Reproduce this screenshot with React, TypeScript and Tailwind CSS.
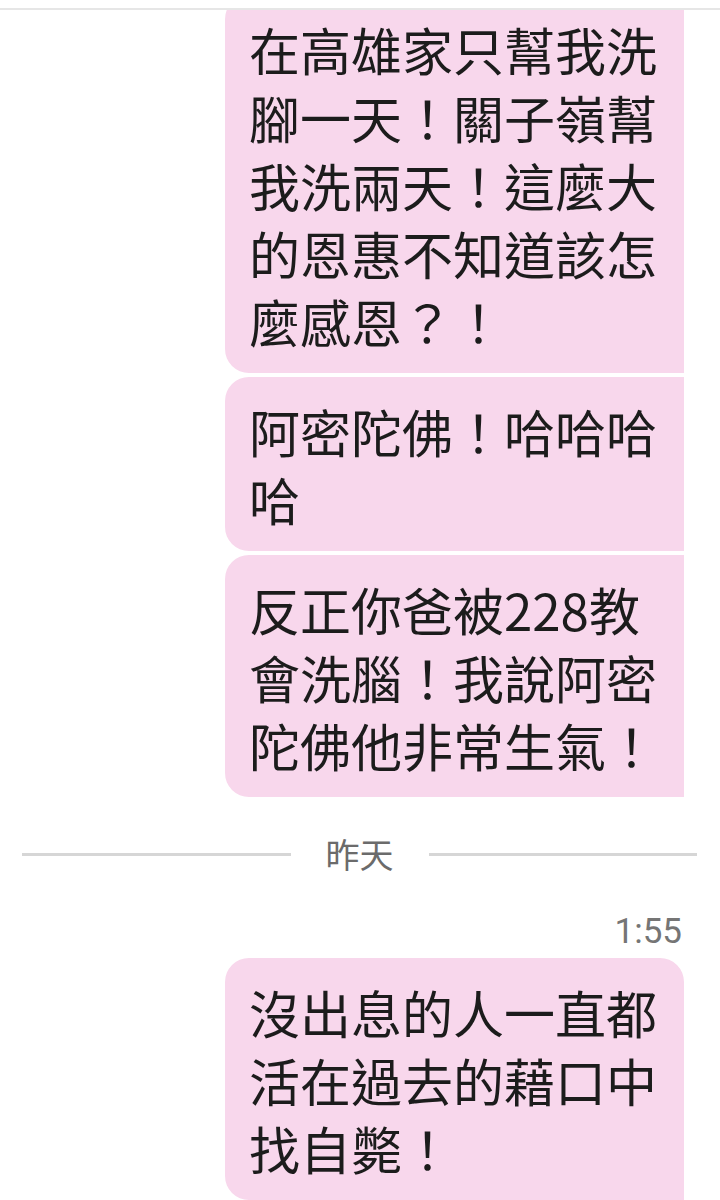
const cjk = { fontFamily: '"Noto Sans CJK TC", "Noto Sans", sans-serif' }
const roboto = { fontFamily: 'Roboto, "Noto Sans", sans-serif' }

interface BubbleProps {
  text: string
  first?: boolean
  className?: string
}

function Bubble(props: BubbleProps) {
  return (
    <div
      className={`w-[459px] self-end bg-[#f8d7ec] text-[#1c1c1c] text-[51px] leading-[68px] pl-[24px] pr-[22px] pt-[20px] pb-[18px] rounded-l-[24px] ${
        props.first ? 'rounded-tr-[24px]' : ''
      } ${props.className ?? ''}`}
      style={cjk}
    >
      {props.text}
    </div>
  )
}

export default function App() {
  return (
    <div className="w-[720px] h-[1200px] bg-white overflow-hidden flex flex-col">
      <div className="h-[8px] shrink-0 bg-white" />
      <div className="h-[2px] shrink-0 bg-[#e6e6e6]" />
      <div className="flex-1 overflow-hidden flex flex-col pr-[36px]">
        <div className="flex flex-col gap-[4px]">
          <Bubble
            text="在高雄家只幫我洗腳一天！關子嶺幫我洗兩天！這麼大的恩惠不知道該怎麼感恩？！"
            className="mt-[-15px]"
          />
          <Bubble text="阿密陀佛！哈哈哈哈" />
          <Bubble text="反正你爸被228教會洗腦！我說阿密陀佛他非常生氣！" />
        </div>

        <div className="mt-[32px] h-[50px] flex items-center pl-[22px] mr-[-13px]">
          <div className="flex-1 h-[3px] bg-[#d6d6d6]" />
          <span className="mx-[35px] text-[34px] leading-[50px] text-[#6b6b6b]" style={cjk}>
            昨天
          </span>
          <div className="flex-1 h-[3px] bg-[#d6d6d6]" />
        </div>

        <div
          className="mt-[33px] text-right text-[35px] leading-[40px] text-[#757575] pr-[2px]"
          style={roboto}
        >
          1:55
        </div>

        <div className="mt-[6px] flex flex-col">
          <Bubble text="沒出息的人一直都活在過去的藉口中找自斃！" first />
        </div>
      </div>
    </div>
  )
}
